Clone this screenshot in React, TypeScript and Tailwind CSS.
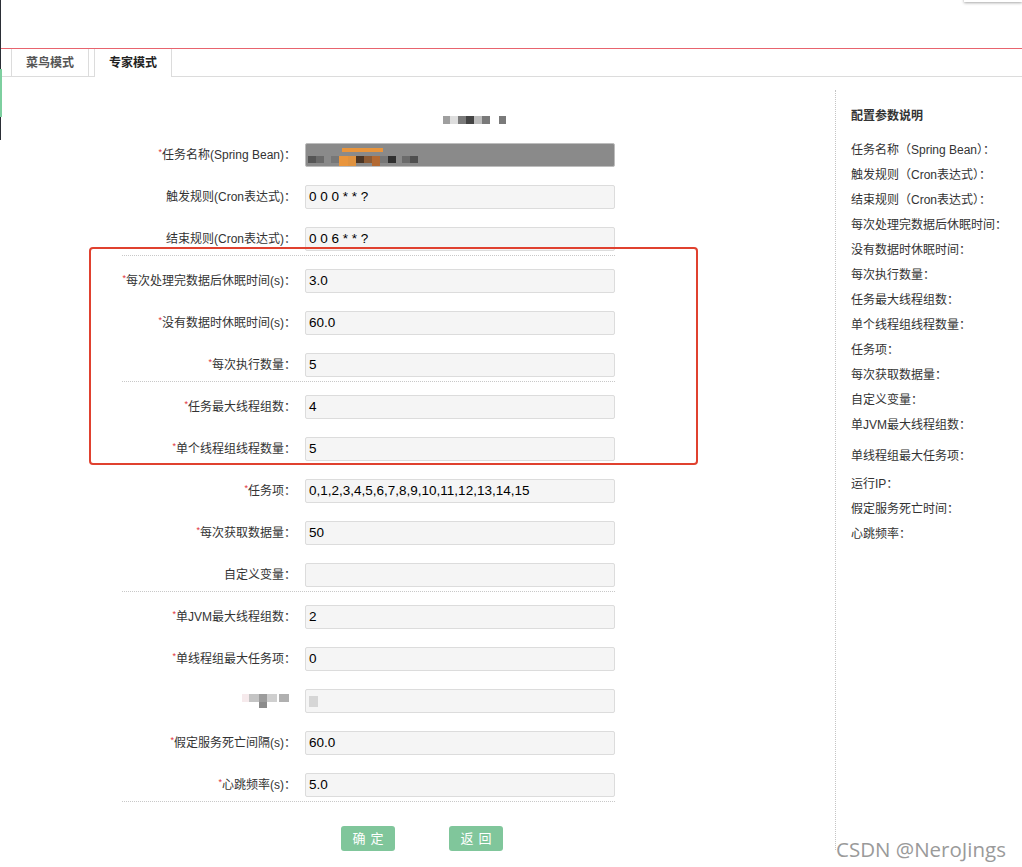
import React from "react";

type Row = { label: string; req?: boolean; value?: string; sep?: boolean; kind?: "bean" | "ip" };

const rows: Row[] = [
  { label: "任务名称(Spring Bean)：", req: true, kind: "bean" },
  { label: "触发规则(Cron表达式)：", value: "0 0 0 * * ?" },
  { label: "结束规则(Cron表达式)：", value: "0 0 6 * * ?", sep: true },
  { label: "每次处理完数据后休眠时间(s)：", req: true, value: "3.0" },
  { label: "没有数据时休眠时间(s)：", req: true, value: "60.0" },
  { label: "每次执行数量：", req: true, value: "5", sep: true },
  { label: "任务最大线程组数：", req: true, value: "4" },
  { label: "单个线程组线程数量：", req: true, value: "5" },
  { label: "任务项：", req: true, value: "0,1,2,3,4,5,6,7,8,9,10,11,12,13,14,15" },
  { label: "每次获取数据量：", req: true, value: "50" },
  { label: "自定义变量：", value: "", sep: true },
  { label: "单JVM最大线程组数：", req: true, value: "2" },
  { label: "单线程组最大任务项：", req: true, value: "0" },
  { label: "", kind: "ip", value: "" },
  { label: "假定服务死亡间隔(s)：", req: true, value: "60.0" },
  { label: "心跳频率(s)：", req: true, value: "5.0", sep: true },
];

const help = [
  "任务名称（Spring Bean）：",
  "触发规则（Cron表达式）：",
  "结束规则（Cron表达式）：",
  "每次处理完数据后休眠时间：",
  "没有数据时休眠时间：",
  "每次执行数量：",
  "任务最大线程组数：",
  "单个线程组线程数量：",
  "任务项：",
  "每次获取数据量：",
  "自定义变量：",
  "单JVM最大线程组数：",
  "单线程组最大任务项：",
  "运行IP：",
  "假定服务死亡时间：",
  "心跳频率：",
];

function BlurLabel() {
  return (
    <div className="flex items-start">
      <div className="w-[7px] h-[8px] bg-[#f6eaec]" />
      <div className="w-[10px] h-[8px] bg-[#c4c4c4]" />
      <div className="flex flex-col">
        <div className="w-[8px] h-[8px] bg-[#9c9c9c]" />
        <div className="w-[8px] h-[6px] bg-[#8c8c8c]" />
      </div>
      <div className="w-[10px] h-[8px] bg-[#cfcfcf]" />
      <div className="w-[10px] h-[8px] bg-[#b0b0b0] ml-[2px]" />
    </div>
  );
}

function BeanInput() {
  return (
    <div className="w-[310px] h-[24px] bg-[#8a8a8a] border border-[#bdbdbd] rounded-[2px] relative overflow-hidden">
      <div className="absolute left-[36px] top-[4px] w-[41px] h-[4px] bg-[#e9953c]" />
      <div className="absolute left-[2px] top-[12px] flex">
        <div className="w-[8px] h-[7px] bg-[#555]" />
        <div className="w-[8px] h-[7px] bg-[#6a6a6a]" />
        <div className="w-[7px] h-[7px]" />
        <div className="w-[8px] h-[7px] bg-[#777]" />
        <div className="w-[9px] h-[12px] bg-[#e9953c]" />
        <div className="w-[8px] h-[12px] bg-[#df923f]" />
        <div className="w-[8px] h-[7px] bg-[#4a3525]" />
        <div className="w-[8px] h-[7px] bg-[#8d5b35]" />
        <div className="w-[8px] h-[10px] bg-[#b46a33]" />
        <div className="w-[8px] h-[7px] bg-[#777]" />
        <div className="w-[8px] h-[7px] bg-[#2f2f2f]" />
        <div className="w-[6px] h-[7px]" />
        <div className="w-[8px] h-[7px] bg-[#6b6b6b]" />
        <div className="w-[8px] h-[7px] bg-[#505050]" />
      </div>
    </div>
  );
}

function Field({ row }: { row: Row }) {
  return (
    <div className={`pt-[13px] ${row.sep ? "pb-[4px] border-b border-dotted border-[#c8c8c8]" : "pb-[5px]"}`}>
      <div className="flex items-center h-[24px]">
        <div className="w-[175px] h-[24px] flex items-center justify-end whitespace-nowrap text-[12px] text-[#333] leading-[16px]">
          {row.kind === "ip" ? (
            <div className="mr-[7px]">
              <BlurLabel />
            </div>
          ) : (
            <span className="flex items-start">
              {row.req && <span className="text-[#e0303a] text-[9px] leading-[10px]">*</span>}
              <span>{row.label}</span>
            </span>
          )}
        </div>
        <div className="ml-[9px] h-[24px]">
          {row.kind === "bean" ? (
            <BeanInput />
          ) : (
            <div className="w-[310px] h-[24px] bg-[#f5f5f5] border border-[#dcdcdc] rounded-[2px] pl-[3px] flex items-center text-[13.5px] leading-[16px] text-black">
              {row.kind === "ip" && <div className="w-[9px] h-[11px] bg-[#d6d6d6]" />}
              {row.value}
            </div>
          )}
        </div>
      </div>
    </div>
  );
}

export default function App() {
  return (
    <div
      className="relative w-[1022px] h-[867px] bg-white overflow-hidden"
      style={{ fontFamily: '"Liberation Sans", "Noto Sans CJK SC", sans-serif' }}
    >
      {/* left edge strip */}
      <div className="absolute left-0 top-0 w-[1px] h-[69px] bg-[#2b2e36]" />
      <div className="absolute left-0 top-[69px] w-[2px] h-[48px] bg-[#7dcf9f]" />
      <div className="absolute left-0 top-[117px] w-[1px] h-[23px] bg-[#2b2e36]" />
      {/* top-right shadow */}
      <div className="absolute right-0 top-[-4px] w-[58px] h-[6px] bg-white shadow-[0_1px_3px_rgba(0,0,0,0.35)]" />

      <div className="h-[49px] border-b border-[#e8646e]" />

      {/* tabs */}
      <div className="flex h-[28px] border-b border-[#dcdcdc] pl-[11px]">
        <div className="w-[78px] h-[27px] border-x border-[#dcdcdc] flex items-center justify-center text-[12px] font-semibold text-[#555]">
          菜鸟模式
        </div>
        <div className="ml-[5px] w-[78px] h-[28px] border-x border-[#dcdcdc] bg-white flex items-center justify-center text-[12px] font-semibold text-[#222]">
          专家模式
        </div>
      </div>

      <div className="flex">
        {/* form */}
        <div className="w-[835px]">
          <div className="h-[53px] pt-[39px] pl-[443px] flex">
            <div className="flex h-[8px]">
              <div className="w-[7px] bg-[#9f9f9f]" />
              <div className="w-[8px] bg-[#dedede]" />
              <div className="w-[8px] bg-[#7a7a7a]" />
              <div className="w-[8px] bg-[#444]" />
              <div className="w-[8px] bg-[#bdbdbd]" />
              <div className="w-[8px] bg-[#7a7a7a]" />
              <div className="w-[9px]" />
              <div className="w-[7px] bg-[#7a7a7a]" />
            </div>
          </div>

          <div className="ml-[122px] w-[493px]">
            {rows.map((r, i) => (
              <Field key={i} row={r} />
            ))}
          </div>

          <div className="flex mt-[24px] ml-[341px] gap-[54px]">
            <button className="w-[54px] h-[25px] rounded-[3px] bg-[#80c69b] text-white text-[13px] leading-[25px] tracking-[5px] pl-[5px]">
              确定
            </button>
            <button className="w-[54px] h-[25px] rounded-[3px] bg-[#80c69b] text-white text-[13px] leading-[25px] tracking-[5px] pl-[5px]">
              返回
            </button>
          </div>
        </div>

        {/* help panel */}
        <div className="mt-[13px] h-[760px] flex-1 border-l border-dotted border-[#c4c4c4] pl-[15px] pt-[18px] text-[12px] text-[#333]">
          <div className="font-bold leading-[17px] mb-[13px]">配置参数说明</div>
          {help.map((h, i) => (
            <div
              key={i}
              className={`leading-[25px] whitespace-nowrap ${i === 12 ? "mt-[6px]" : ""} ${i === 13 ? "mt-[3px]" : ""}`}
            >
              {h}
            </div>
          ))}
        </div>
      </div>

      {/* annotation box */}
      <div className="absolute left-[89px] top-[247px] w-[609px] h-[218px] border-2 border-[#e0412f] rounded-[4px]" />

      {/* watermark */}
      <div
        className="absolute left-[836px] top-[834px] text-[20.5px] text-[#9a9a9a] whitespace-nowrap"
        style={{ fontFamily: '"Open Sans", sans-serif' }}
      >
        CSDN @NeroJings
      </div>
    </div>
  );
}
